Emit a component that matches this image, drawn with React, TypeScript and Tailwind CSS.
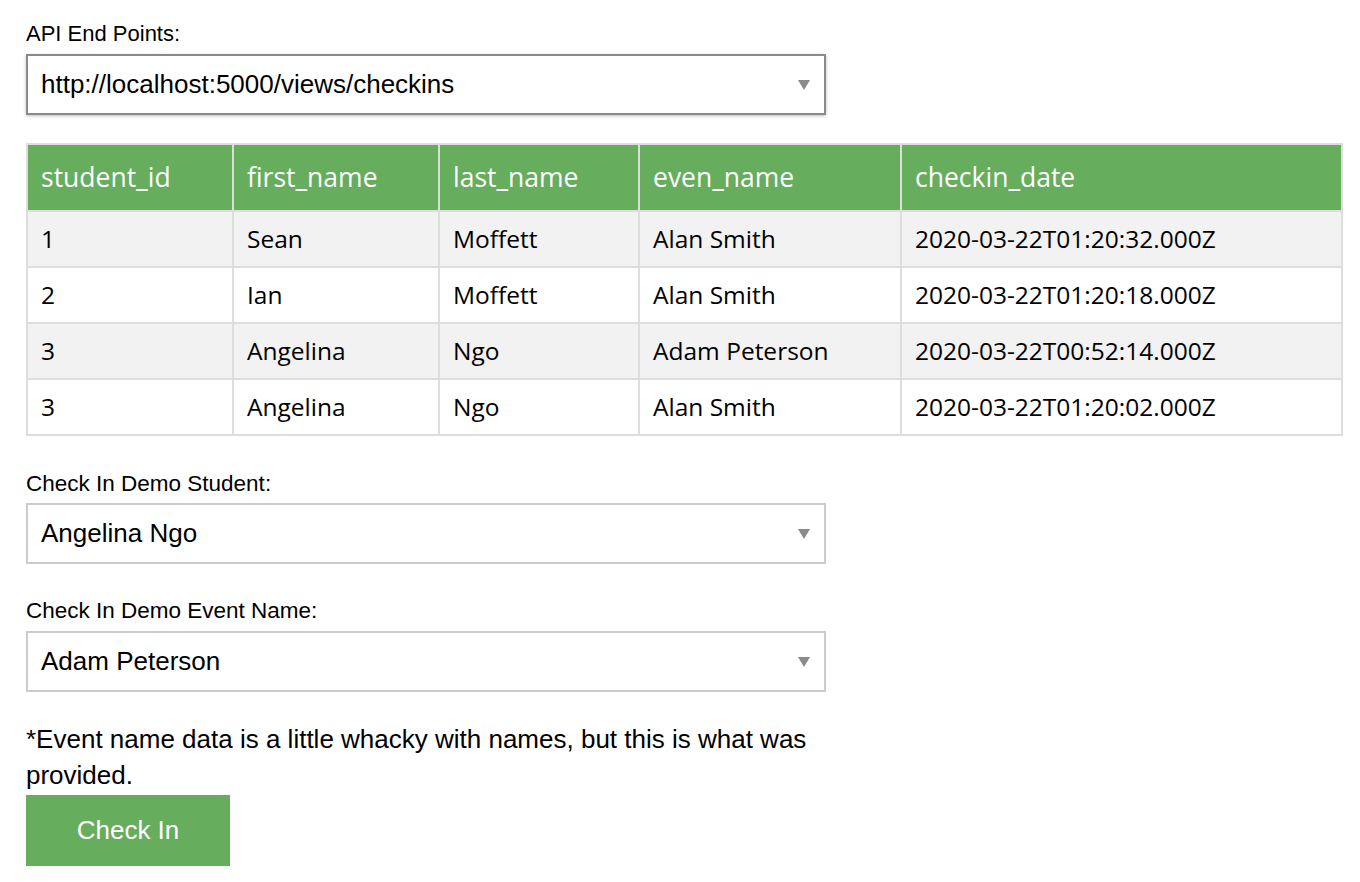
const rows = [
  ["1", "Sean", "Moffett", "Alan Smith", "2020-03-22T01:20:32.000Z"],
  ["2", "Ian", "Moffett", "Alan Smith", "2020-03-22T01:20:18.000Z"],
  ["3", "Angelina", "Ngo", "Adam Peterson", "2020-03-22T00:52:14.000Z"],
  ["3", "Angelina", "Ngo", "Alan Smith", "2020-03-22T01:20:02.000Z"],
];

const headers = ["student_id", "first_name", "last_name", "even_name", "checkin_date"];
const widths = ["w-[206px]", "w-[206px]", "w-[200px]", "w-[262px]", "w-[441px]"];

const Arrow = () => (
  <svg width="12" height="10" viewBox="0 0 12 10" className="shrink-0">
    <polygon points="0,0 12,0 6,10" fill="#8a8a8a" />
  </svg>
);

const Select = ({ value, focused }: { value: string; focused?: boolean }) => (
  <div
    className={
      focused
        ? "flex h-[61px] w-[800px] items-center justify-between border-2 border-[#8a8a8a] bg-white pl-[13px] pr-[14px] shadow-[0_1px_3px_rgba(0,0,0,0.25)]"
        : "flex h-[61px] w-[800px] items-center justify-between border-2 border-[#cccccc] bg-white pl-[13px] pr-[14px]"
    }
  >
    <span className="text-[26px] text-black">{value}</span>
    <Arrow />
  </div>
);

const App = () => {
  return (
    <div className="min-h-screen bg-white px-[26px] pt-[20px] font-['Liberation_Sans',Arial,sans-serif] text-black">
      <p className="text-[22px] leading-[28px] mb-[6px]">API End Points:</p>
      <Select value="http://localhost:5000/views/checkins" focused />

      <table className="mt-[28px] w-[1315px] table-fixed border-collapse font-['Open_Sans',sans-serif]">
        <colgroup>
          {widths.map((w, i) => (
            <col key={i} className={w} />
          ))}
        </colgroup>
        <thead>
          <tr className="h-[67px] bg-[#66ad5e]">
            {headers.map((h) => (
              <th
                key={h}
                className="border-2 border-[#dddddd] px-[13px] text-left text-[26.5px] font-medium text-white"
              >
                {h}
              </th>
            ))}
          </tr>
        </thead>
        <tbody>
          {rows.map((r, i) => (
            <tr key={i} className={i % 2 === 0 ? "h-[56px] bg-[#f2f2f2]" : "h-[56px] bg-white"}>
              {r.map((c, j) => (
                <td key={j} className="border-2 border-[#dddddd] px-[13px] text-[24.5px] text-black">
                  {c}
                </td>
              ))}
            </tr>
          ))}
        </tbody>
      </table>

      <p className="mt-[34px] mb-[5px] text-[22.5px] leading-[28px]">Check In Demo Student:</p>
      <Select value="Angelina Ngo" />

      <p className="mt-[33px] mb-[6px] text-[22.5px] leading-[28px]">Check In Demo Event Name:</p>
      <Select value="Adam Peterson" />

      <p className="mt-[29px] w-[800px] text-[26px] leading-[36px]">
        *Event name data is a little whacky with names, but this is what was provided.
      </p>
      <button className="mt-[2px] h-[71px] w-[204px] bg-[#66ad5e] text-[26px] text-white">
        Check In
      </button>
    </div>
  );
};

export default App;
